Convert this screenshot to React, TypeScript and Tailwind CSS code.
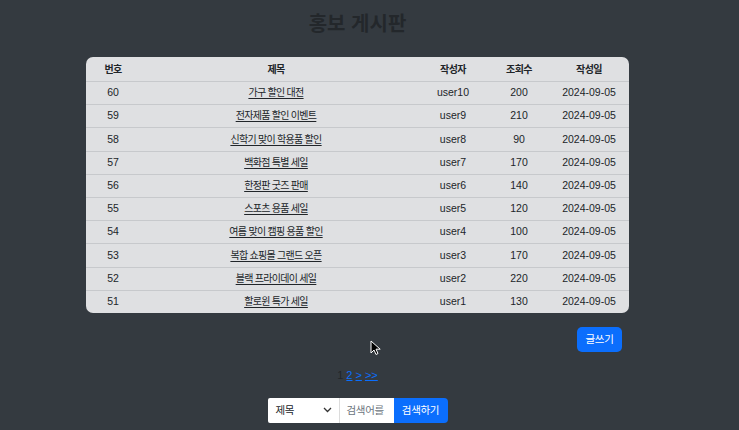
import React from "react";

const rows = [
  [60, "가구 할인 대전", "user10", 200],
  [59, "전자제품 할인 이벤트", "user9", 210],
  [58, "신학기 맞이 학용품 할인", "user8", 90],
  [57, "백화점 특별 세일", "user7", 170],
  [56, "한정판 굿즈 판매", "user6", 140],
  [55, "스포츠 용품 세일", "user5", 120],
  [54, "여름 맞이 캠핑 용품 할인", "user4", 100],
  [53, "복합 쇼핑몰 그랜드 오픈", "user3", 170],
  [52, "블랙 프라이데이 세일", "user2", 220],
  [51, "할로윈 특가 세일", "user1", 130],
] as const;

const font = { fontFamily: '"Liberation Sans", "Noto Sans CJK KR", sans-serif' };

export default function App() {
  return (
    <div
      className="relative w-[739px] h-[430px] bg-[#343a40] text-[#212529] overflow-hidden"
      style={font}
    >
      <div className="w-[715px] flex flex-col items-center">
        <h1 className="mt-[9px] h-[30px] text-[20px] font-bold leading-[30px] text-[#23272b]">
          홍보 게시판
        </h1>
        <div className="mt-[18px] w-[543px] rounded-[7px] bg-[#dfe0e2] overflow-hidden text-[10.5px]">
          <div className="flex h-[24px] items-center font-bold text-[10px] tracking-[-0.6px]">
            <div className="w-[54px] text-center">번호</div>
            <div className="w-[277px] pr-[5px] text-center">제목</div>
            <div className="w-[72px] text-center">작성자</div>
            <div className="w-[60px] text-center">조회수</div>
            <div className="w-[80px] text-center">작성일</div>
          </div>
          {rows.map(([n, t, u, v]) => (
            <div
              key={n}
              className="flex h-[23.2px] items-center border-t border-[#c7c9cc]"
            >
              <div className="w-[54px] text-center">{n}</div>
              <div className="w-[277px] pr-[5px] text-center">
                <span className="underline underline-offset-2 text-[10px] tracking-[-0.7px]">
                  {t}
                </span>
              </div>
              <div className="w-[72px] text-center">{u}</div>
              <div className="w-[60px] text-center">{v}</div>
              <div className="w-[80px] text-center">2024-09-05</div>
            </div>
          ))}
        </div>
        <div className="w-[543px] flex justify-end mt-[14px] pr-[7px]">
          <button className="w-[45px] h-[25px] rounded-[5px] bg-[#0b6efd] text-white text-[10.5px] tracking-[-0.3px]">
            글쓰기
          </button>
        </div>
        <div className="mt-[16px] text-[11px] h-[14px] leading-[14px] flex gap-[3px] items-center">
          <span className="text-[#212529]">1</span>
          <span className="text-[#0b6efd] underline">2</span>
          <span className="text-[#0b6efd] underline">&gt;</span>
          <span className="text-[#0b6efd] underline">&gt;&gt;</span>
        </div>
        <div className="mt-[16px] flex h-[25px] text-[10.5px] tracking-[-0.3px]">
          <div className="w-[71px] bg-white flex items-center justify-between pl-[8px] pr-[7px] rounded-l-[2px]">
            <span className="text-[#212529]">제목</span>
            <svg width="9" height="6" viewBox="0 0 9 6">
              <path d="M1 1l3.5 3.5L8 1" fill="none" stroke="#333" strokeWidth="1.3" />
            </svg>
          </div>
          <div className="w-[55px] bg-white border-l border-[#dcdcdc] flex items-center pl-[7px] overflow-hidden whitespace-nowrap text-[#6c757d]">
            검색어를
          </div>
          <button className="w-[54px] bg-[#0b6efd] text-white rounded-r-[4px]">
            검색하기
          </button>
        </div>
      </div>
      <svg
        className="absolute left-[370px] top-[340px]"
        width="12"
        height="16"
        viewBox="0 0 12 16"
      >
        <path
          d="M1 1v12l3-3 2 4.5 2-1-2-4.3h4.2z"
          fill="#000"
          stroke="#fff"
          strokeWidth="1"
          strokeLinejoin="round"
        />
      </svg>
    </div>
  );
}
